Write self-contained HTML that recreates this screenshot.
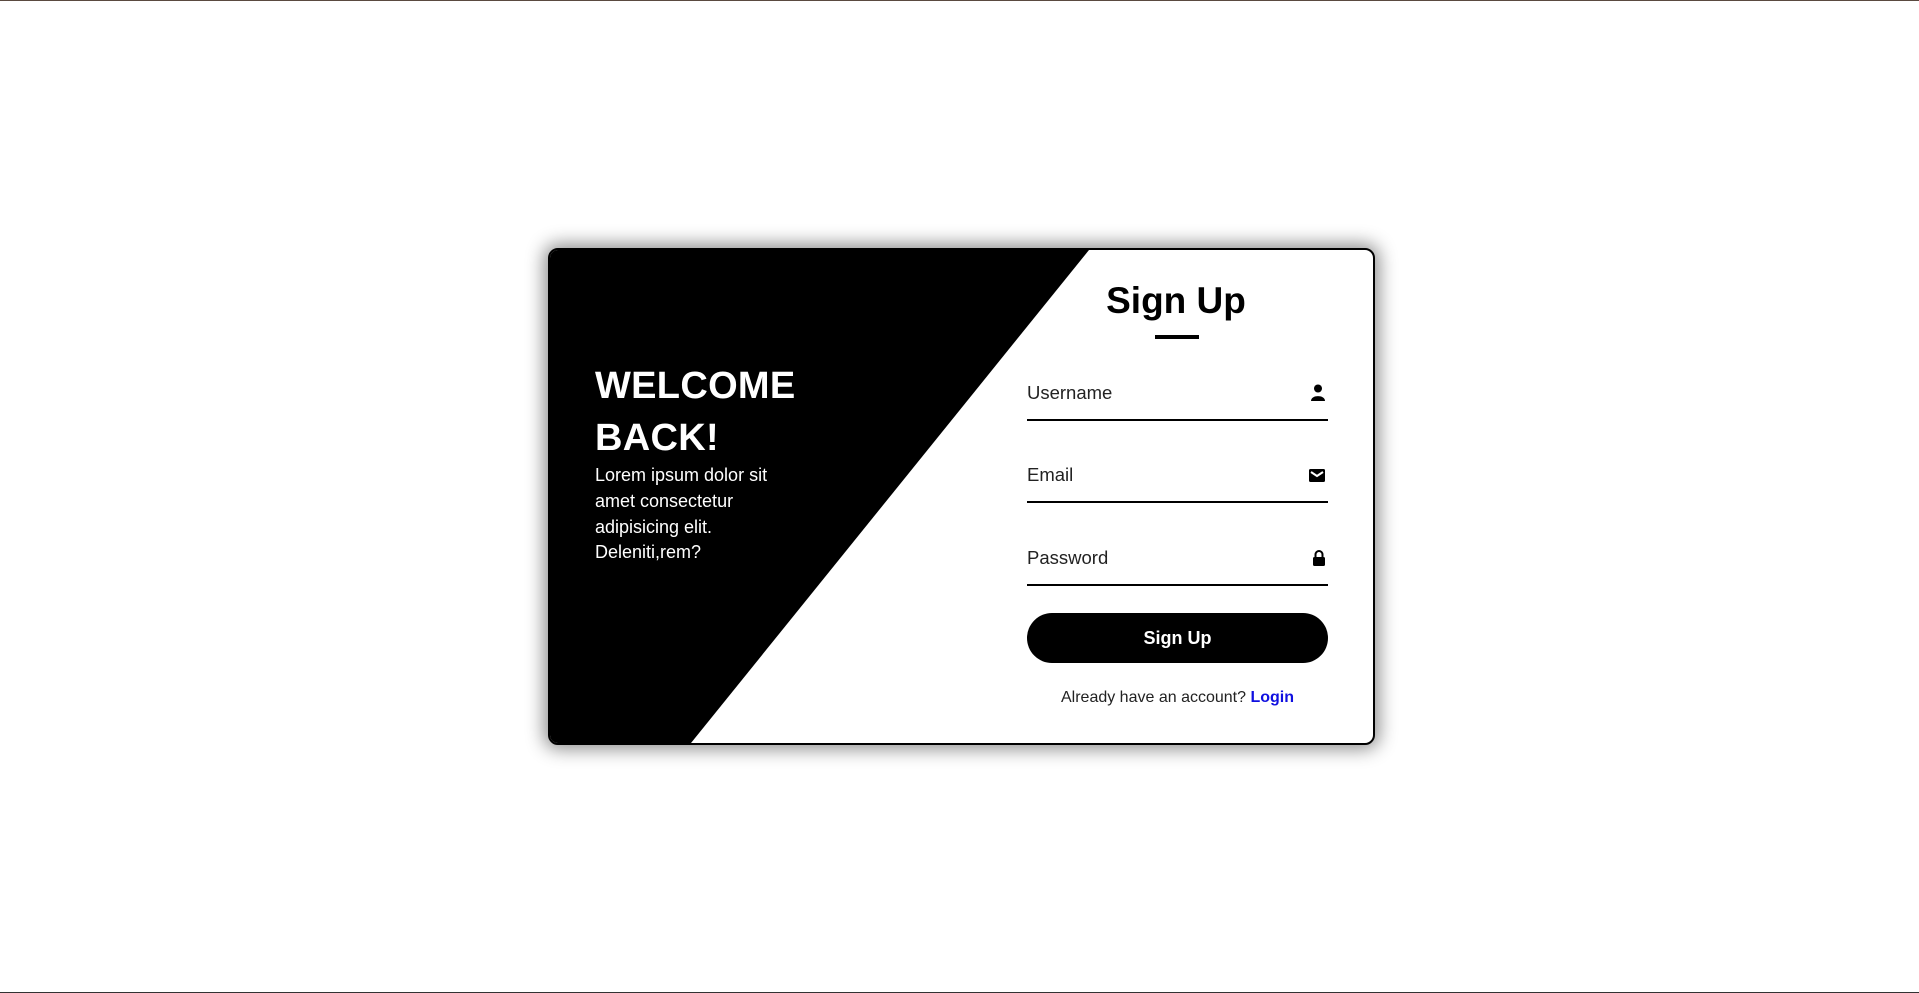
<!DOCTYPE html>
<html><head><style>
html,body{margin:0;padding:0;width:1919px;height:993px;background:#fff;overflow:hidden;font-family:"Liberation Sans",sans-serif;}
.topl{position:absolute;left:0;top:0;width:1919px;height:1px;background:#5a4a40;}
.botl{position:absolute;left:0;top:992px;width:1919px;height:1px;background:#333;}
.card{position:absolute;left:548px;top:248px;width:823px;height:493px;border:2px solid #000;border-radius:10px;background:#fff;overflow:hidden;box-shadow:0 0 18px 4px rgba(0,0,0,.45);}
.card svg.bg{position:absolute;left:0;top:0;}
.wel{position:absolute;left:45px;top:110px;color:#fff;font-weight:bold;font-size:38px;line-height:52px;letter-spacing:0.3px;}
.p{position:absolute;left:45px;top:213px;color:#fff;font-size:18px;line-height:25.8px;width:215px;}
.title{position:absolute;left:476px;width:300px;text-align:center;top:30px;font-size:37px;font-weight:bold;}
.ul{position:absolute;left:605px;top:85px;width:44px;height:4px;background:#000;}
.f{position:absolute;left:477px;width:301px;border-bottom:2.5px solid #000;height:40px;}
.f span{position:absolute;left:0;top:3px;font-size:18.5px;color:#222;}
.f svg{position:absolute;right:2px;top:4px;}
.btn{position:absolute;left:477px;top:363px;width:301px;height:50px;border-radius:25px;background:#000;color:#fff;font-weight:bold;font-size:18px;text-align:center;line-height:50px;}
.foot{position:absolute;left:477px;width:301px;top:439px;text-align:center;font-size:16px;color:#222;}
.foot b{color:#1010e0;}
</style></head><body>
<div class="topl"></div><div class="botl"></div>
<div class="card">
<svg class="bg" width="823" height="493"><polygon points="0,0 539,0 141,493 0,493" fill="#000"/></svg>
<div class="wel">WELCOME<br>BACK!</div>
<div class="p">Lorem ipsum dolor sit amet consectetur adipisicing elit. Deleniti,rem?</div>
<div class="title">Sign Up</div>
<div class="ul"></div>
<div class="f" style="top:129px"><span>Username</span><svg width="16" height="20" viewBox="0 0 16 20"><circle cx="8" cy="5.5" r="4" fill="#000"/><path d="M1 18 C1 11.5 15 11.5 15 18 Z" fill="#000"/></svg></div>
<div class="f" style="top:211px"><span>Email</span><svg width="18" height="20" viewBox="0 0 18 20"><rect x="1" y="4" width="16" height="13" rx="1.5" fill="#000"/><path d="M3 7 L9 11 L15 7" stroke="#fff" stroke-width="2" fill="none"/></svg></div>
<div class="f" style="top:294px"><span>Password</span><svg width="14" height="20" viewBox="0 0 14 20"><path d="M3.5 9 V6.5 a3.5 3.5 0 0 1 7 0 V9" stroke="#000" stroke-width="2" fill="none"/><rect x="1" y="9" width="12" height="9" rx="1.5" fill="#000"/></svg></div>
<div class="btn">Sign Up</div>
<div class="foot">Already have an account? <b>Login</b></div>
</div>
</body></html>
